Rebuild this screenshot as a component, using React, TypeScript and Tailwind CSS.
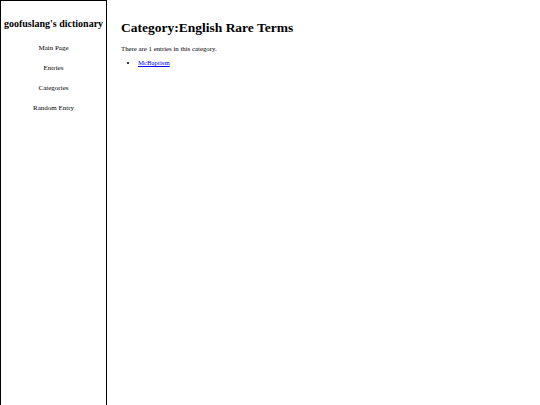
export default function App() {
  const nav = ["Main Page", "Entries", "Categories", "Random Entry"];
  return (
    <div className="flex h-[405px] w-[540px] overflow-hidden bg-white text-black font-['Liberation_Serif',serif]">
      <aside className="flex h-full w-[107px] shrink-0 flex-col items-center border border-b-0 border-black">
        <h2 className="mt-[16px] whitespace-nowrap text-[10px] font-bold leading-[13px]">
          goofuslang's dictionary
        </h2>
        <nav className="mt-[14px] flex flex-col items-center gap-[11px]">
          {nav.map((item) => (
            <a key={item} href="#" className="text-[7px] leading-[9px] text-black no-underline">
              {item}
            </a>
          ))}
        </nav>
      </aside>
      <main className="flex-1 pl-[14px] pt-[19px]">
        <h1 className="text-[13.5px] font-bold leading-[17px]">Category:English Rare Terms</h1>
        <p className="mt-[9px] text-[6.8px] leading-[8px]">There are 1 entries in this category.</p>
        <ul className="mt-[6px] list-disc pl-[17px] text-[6.8px] leading-[8px]">
          <li>
            <a href="#" className="text-[#0000ee] underline">McBaptism</a>
          </li>
        </ul>
      </main>
    </div>
  );
}
